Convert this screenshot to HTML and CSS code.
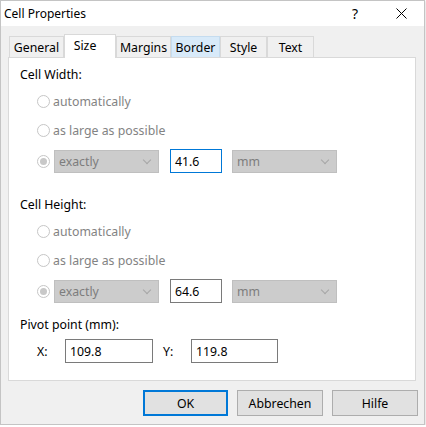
FILE: index.html
```html
<!DOCTYPE html>
<html lang="en">
<head>
  <meta charset="UTF-8" />
  <title>Cell Properties</title>
  <link rel="stylesheet" href="styles.css">
</head>
<body>
  <div class="window">
    <div class="titlebar">
      <span class="title">Cell Properties</span>
      <span class="caption-btn">?</span>
      <span class="caption-btn">
        <svg width="11" height="11" viewBox="0 0 11 11"><path d="M0.5 0.5L10.5 10.5M10.5 0.5L0.5 10.5" stroke="#000" stroke-width="1" fill="none"/></svg>
      </span>
    </div>

    <div class="client">
      <div class="tabs">
        <div class="tab tab-general">General</div>
        <div class="tab tab-size selected">Size</div>
        <div class="tab tab-margins">Margins</div>
        <div class="tab tab-border hot">Border</div>
        <div class="tab tab-style">Style</div>
        <div class="tab tab-text">Text</div>
      </div>

      <div class="panel">
        <div class="group-label">Cell Width:</div>
        <div class="radio-row first"><span class="radio"></span>automatically</div>
        <div class="radio-row"><span class="radio"></span>as large as possible</div>
        <div class="value-row">
          <span class="radio checked"></span>
          <div class="combo combo-mode">exactly<span class="chevron"></span></div>
          <div class="edit edit-size focused">41.6</div>
          <div class="combo combo-unit">mm<span class="chevron"></span></div>
        </div>

        <div class="group-label second">Cell Height:</div>
        <div class="radio-row first"><span class="radio"></span>automatically</div>
        <div class="radio-row"><span class="radio"></span>as large as possible</div>
        <div class="value-row">
          <span class="radio checked"></span>
          <div class="combo combo-mode">exactly<span class="chevron"></span></div>
          <div class="edit edit-size">64.6</div>
          <div class="combo combo-unit">mm<span class="chevron"></span></div>
        </div>

        <div class="group-label third">Pivot point (mm):</div>
        <div class="pivot-row">
          <span class="axis">X:</span>
          <div class="edit edit-x">109.8</div>
          <span class="axis axis-y">Y:</span>
          <div class="edit edit-y">119.8</div>
        </div>
      </div>

      <div class="buttons">
        <button class="btn default">OK</button>
        <button class="btn">Abbrechen</button>
        <button class="btn">Hilfe</button>
      </div>
    </div>
  </div>
</body>
</html>
```

FILE: styles.css
```css
* {
  margin: 0;
  padding: 0;
  box-sizing: border-box;
}
body {
  background: #fff;
  font-family: 'Segoe UI', 'Noto Sans', sans-serif;
  font-size: 12.3px;
  color: #000;
}
.window {
  width: 425px;
  height: 425px;
  border: 1px solid #c4c4c4;
  background: #f0f0f0;
  box-shadow: 1px 1px 2px rgba(0,0,0,0.12);
  display: flex;
  flex-direction: column;
}

/* title bar */
.titlebar {
  height: 25px;
  background: #fff;
  display: flex;
  align-items: center;
  padding-left: 3px;
}
.title {
  flex: 1;
  line-height: 25px;
  font-size: 12px;
}
.caption-btn {
  width: 46px;
  height: 25px;
  display: flex;
  align-items: center;
  justify-content: center;
  font-size: 14px;
}

/* dialog client area */
.client {
  flex: 1;
  padding: 8px 8px 0 7px;
}
.tabs {
  display: flex;
  align-items: flex-end;
  height: 23px;
  padding-left: 1px;
}
.tab {
  height: 21px;
  border: 1px solid #d9d9d9;
  border-bottom: none;
  background: #f0f0f0;
  display: flex;
  align-items: center;
  justify-content: center;
}
.tab.selected {
  height: 24px;
  margin-bottom: -1px;
  background: #fff;
  position: relative;
  z-index: 1;
  padding: 0 10px 3px 0;
}
.tab.hot {
  background: #d8eaf9;
  border-color: #c5dcef;
}
.tab-general { width: 55px; }
.tab-size { width: 52px; }
.tab-margins { width: 55px; }
.tab-border { width: 49px; }
.tab-style { width: 47px; }
.tab-text { width: 47px; }

.panel {
  height: 324px;
  border: 1px solid #d9d9d9;
  background: #fff;
  padding: 9px 11px 0 11px;
}
.group-label {
  height: 16px;
  line-height: 16px;
}
.group-label.second { margin-top: 24px; }
.group-label.third { margin-top: 14px; }

.radio-row {
  height: 20px;
  margin-top: 9px;
  margin-left: 17px;
  display: flex;
  align-items: center;
  color: #838383;
}
.radio-row.first { margin-top: 8px; }
.radio {
  width: 13px;
  height: 13px;
  border: 1px solid #c6c6c6;
  border-radius: 50%;
  background: #fff;
  margin-right: 3px;
  flex-shrink: 0;
  display: flex;
  align-items: center;
  justify-content: center;
}
.radio.checked::after {
  content: "";
  width: 7px;
  height: 7px;
  border-radius: 50%;
  background: #c8c8c8;
}

.value-row {
  height: 24px;
  margin-top: 9px;
  margin-left: 17px;
  display: flex;
  align-items: center;
}
.value-row .radio { margin-right: 4px; }
.combo {
  width: 105px;
  height: 23px;
  background: #cccccc;
  border: 1px solid #bfbfbf;
  color: #7d7d7d;
  padding-left: 4px;
  display: flex;
  align-items: center;
  position: relative;
}
.combo-unit { margin-left: 10px; }
.chevron {
  position: absolute;
  right: 8px;
  top: 6px;
  width: 6px;
  height: 6px;
  border-right: 1px solid #a6a6a6;
  border-bottom: 1px solid #a6a6a6;
  transform: rotate(45deg);
}
.edit {
  height: 24px;
  border: 1px solid #7a7a7a;
  background: #fff;
  padding-left: 4px;
  display: flex;
  align-items: center;
}
.edit.focused { border-color: #0078d7; }
.edit-size {
  width: 52px;
  margin-left: 11px;
}

.pivot-row {
  height: 24px;
  margin-top: 6px;
  margin-left: 17px;
  display: flex;
  align-items: center;
}
.axis { width: 28px; }
.axis-y {
  margin-left: 10px;
}
.edit-x { width: 88px; }
.edit-y { width: 87px; }

/* OK / Abbrechen / Hilfe */
.buttons {
  display: flex;
  justify-content: flex-end;
  gap: 9px;
  margin-top: 9px;
  margin-right: -2px;
}
.btn {
  width: 86px;
  height: 26px;
  background: #e1e1e1;
  border: 1px solid #adadad;
  font-family: inherit;
  font-size: 12.3px;
  color: #000;
}
.btn.default {
  width: 85px;
  border: 2px solid #0078d7;
}
```
